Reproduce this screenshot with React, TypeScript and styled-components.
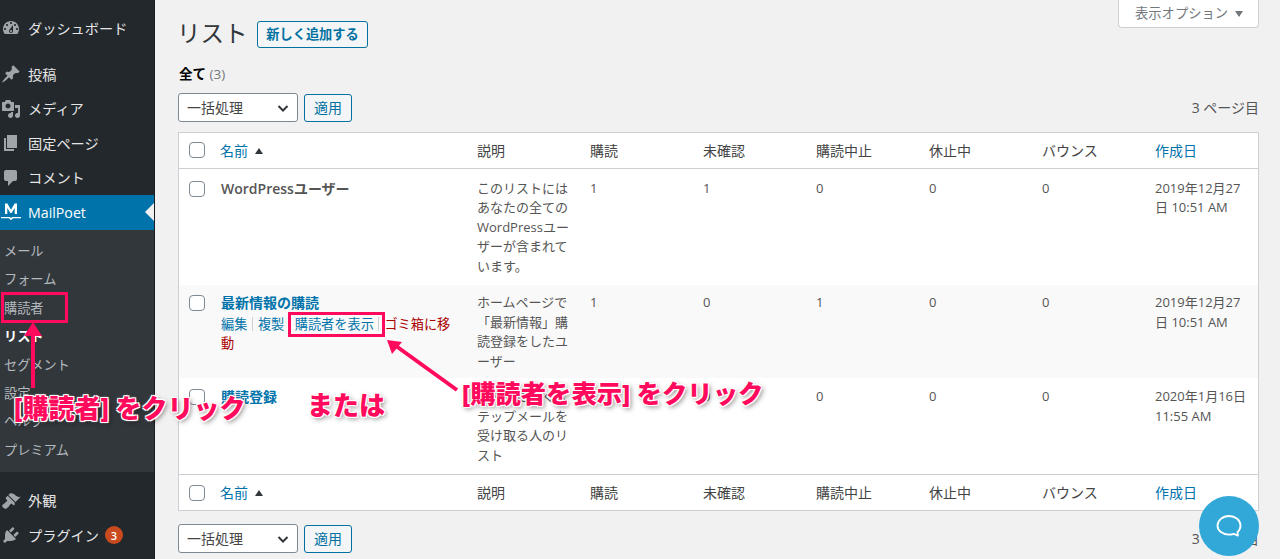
import React from "react"
import styled, { createGlobalStyle } from "styled-components"

const GlobalStyle = createGlobalStyle`
  html, body {
    margin: 0;
    padding: 0;
    background: #f1f1f1;
  }
  body {
    font-family: "Open Sans", "Noto Sans CJK JP", sans-serif;
    font-size: 13px;
    line-height: 19.5px;
    color: #555;
  }
`

const Page = styled.div`
  position: relative;
  display: flex;
  width: 1280px;
  height: 559px;
  overflow: hidden;
`

const Sidebar = styled.nav`
  flex: 0 0 155px;
  box-sizing: border-box;
  padding-top: 11px;
  background: #23282d;
  border-right: 1px solid #1b1f23;
`

const MenuItem = styled.div<{ $current?: boolean; $gap?: boolean }>`
  position: relative;
  display: flex;
  align-items: center;
  height: 34.5px;
  margin-top: ${(p) => (p.$gap ? "11.5px" : "0")};
  font-size: 14.2px;
  color: ${(p) => (p.$current ? "#fff" : "#e6e6e6")};
  background: ${(p) => (p.$current ? "#0073aa" : "transparent")};
  ${(p) =>
    p.$current
      ? `
    &::after {
      content: "";
      position: absolute;
      right: 0;
      top: 8px;
      border: 9px solid transparent;
      border-left: 0;
      border-right-color: #f1f1f1;
    }
  `
      : ""}
`

const MenuIcon = styled.svg<{ $current?: boolean }>`
  flex: 0 0 20px;
  width: 20px;
  height: 20px;
  margin: 0 7px 0 1px;
  fill: ${(p) => (p.$current ? "#fff" : "#a0a5aa")};
`

const Badge = styled.span`
  display: flex;
  align-items: center;
  justify-content: center;
  width: 18px;
  height: 18px;
  margin-left: 6px;
  border-radius: 50%;
  background: #ca4a1f;
  color: #fff;
  font-size: 11px;
  font-weight: 600;
`

const SubMenu = styled.div`
  padding: 8px 0 7.5px;
  background: #32373c;
`

const SubItem = styled.div<{ $current?: boolean }>`
  display: flex;
  align-items: center;
  height: 28.4px;
  padding-left: 4px;
  font-size: 13.2px;
  font-weight: ${(p) => (p.$current ? 700 : 400)};
  color: ${(p) => (p.$current ? "#fff" : "#b4b9be")};
`

const Main = styled.main`
  flex: 1;
  min-width: 0;
  padding: 0 21px 0 23px;
`

const Header = styled.header`
  display: flex;
  align-items: flex-start;
  height: 65px;
`

const Title = styled.h1`
  margin: 19px 9.5px 0 -1px;
  font-size: 23.5px;
  line-height: 29px;
  font-weight: 400;
  color: #32373c;
`

const AddButton = styled.div`
  box-sizing: border-box;
  margin-top: 21px;
  width: 111px;
  height: 27px;
  display: flex;
  align-items: center;
  justify-content: center;
  border: 1.5px solid #0071a1;
  border-radius: 3px;
  background: #f3f5f6;
  color: #0071a1;
  font-size: 13.2px;
  font-weight: 600;
`

const OptionsTab = styled.div`
  box-sizing: border-box;
  display: flex;
  align-items: center;
  margin-left: auto;
  width: 141px;
  height: 28px;
  padding-left: 16px;
  background: #fff;
  border: 1px solid #ccd0d4;
  border-top: 0;
  border-radius: 0 0 4px 4px;
  color: #72777c;
  font-size: 13.3px;
`

const TabCaret = styled.span`
  margin-left: 7px;
  border: 4px solid transparent;
  border-top: 6px solid #72777c;
  border-bottom: 0;
`

const Filter = styled.div`
  height: 19px;
  margin-bottom: 9px;
  margin-left: 1px;
  font-size: 13.5px;
  color: #72777c;
  strong {
    color: #000;
    font-weight: 700;
  }
`

const Toolbar = styled.div`
  display: flex;
  align-items: center;
  gap: 6px;
  height: 29px;
`

const BulkSelect = styled.div`
  box-sizing: border-box;
  display: flex;
  align-items: center;
  justify-content: space-between;
  width: 120px;
  height: 29px;
  padding: 0 8px;
  border: 1px solid #7e8993;
  border-radius: 3px;
  background: #fff;
  color: #444;
  font-size: 14px;
`

const Chevron = styled.svg`
  width: 12px;
  height: 12px;
  fill: none;
  stroke: #32373c;
  stroke-width: 2;
`

const ApplyButton = styled.div`
  box-sizing: border-box;
  display: flex;
  align-items: center;
  justify-content: center;
  width: 48px;
  height: 28px;
  border: 1px solid #0071a1;
  border-radius: 3px;
  background: #f3f5f6;
  color: #0071a1;
  font-size: 14px;
`

const PageCount = styled.div`
  margin-left: auto;
  font-size: 14px;
  color: #555;
`

const ListTable = styled.table`
  box-sizing: border-box;
  width: 100%;
  margin: 10px 0 13px;
  table-layout: fixed;
  border-collapse: separate;
  border-spacing: 0;
  background: #fff;
  border: 1px solid #ccd0d4;
`

const HeadCell = styled.th<{ $foot?: boolean }>`
  height: ${(p) => (p.$foot ? "36px" : "35.5px")};
  box-sizing: border-box;
  padding: 0 10px;
  text-align: left;
  font-size: 14px;
  font-weight: 400;
  color: #444;
  border-bottom: ${(p) => (p.$foot ? "0" : "1px solid #ccd0d4")};
  border-top: ${(p) => (p.$foot ? "1px solid #ccd0d4" : "0")};
`

const SortLink = styled.span`
  color: #0073aa;
`

const SortCaret = styled.span`
  display: inline-block;
  margin-left: 7px;
  vertical-align: 2px;
  border: 4.5px solid transparent;
  border-bottom: 6px solid #32373c;
  border-top: 0;
`

const Row = styled.tr<{ $alt?: boolean; $height: number; $top: number }>`
  --top: ${(p) => p.$top}px;
  height: ${(p) => p.$height}px;
  background: ${(p) => (p.$alt ? "#f9f9f9" : "#fff")};
`

const Cell = styled.td`
  padding: var(--top) 10px 5px;
  vertical-align: top;
  font-size: 13px;
  line-height: 19.5px;
  color: #555;
  overflow-wrap: anywhere;
`

const CheckCell = styled(Cell)`
  padding: calc(var(--top) + 2px) 0 0 10px;
`

const Check = styled.input.attrs({ type: "checkbox" })`
  appearance: none;
  display: block;
  box-sizing: border-box;
  width: 16px;
  height: 16px;
  margin: 0;
  background: #fff;
  border: 1px solid #7e8993;
  border-radius: 4px;
`

const RowName = styled.div<{ $plain?: boolean }>`
  font-size: 14px;
  font-weight: 600;
  padding-left: 1px;
  color: ${(p) => (p.$plain ? "#555" : "#0073aa")};
`

const RowActions = styled.div`
  margin-top: 2px;
  padding-left: 1px;
  font-size: 13.2px;
`

const ActionLink = styled.span<{ $danger?: boolean }>`
  color: ${(p) => (p.$danger ? "#a00" : "#0073aa")};
`

const ActionSep = styled.span`
  display: inline-block;
  width: 1px;
  height: 14px;
  margin: 0 5px 0 4.5px;
  vertical-align: -2px;
  background: #ccd0d4;
`

const Mark = styled.div`
  position: absolute;
  box-sizing: border-box;
  border: 3px solid #ff0a5c;
`

const SideMark = styled(Mark)`
  left: 1px;
  top: 292px;
  width: 67px;
  height: 31px;
`

const RowMark = styled(Mark)`
  left: 288px;
  top: 312px;
  width: 97px;
  height: 25px;
`

const Arrows = styled.svg`
  position: absolute;
  left: 0;
  top: 0;
  width: 1280px;
  height: 559px;
  fill: #ff0a5c;
  stroke: #ff0a5c;
  pointer-events: none;
`

const Callout = styled.div<{ $size?: number }>`
  position: absolute;
  font-size: ${(p) => p.$size ?? 26}px;
  line-height: 32px;
  font-weight: 900;
  white-space: nowrap;
  color: #ff0a5c;
  text-shadow: -1px -1px 0 #fff, 1px -1px 0 #fff, -1px 1px 0 #fff, 1px 1px 0 #fff,
    0 0 3px #fff, 2px 2px 5px rgba(0, 0, 0, 0.5);
`

const SideCallout = styled(Callout)`
  left: 14px;
  top: 392px;
`

const OrCallout = styled(Callout)`
  left: 307px;
  top: 389px;
`

const RowCallout = styled(Callout)`
  left: 462px;
  top: 377px;
`

const ChatBubble = styled.div`
  position: absolute;
  left: 1199px;
  top: 496px;
  width: 60px;
  height: 60px;
  display: flex;
  align-items: center;
  justify-content: center;
  border-radius: 50%;
  background: #31a8d8;
`

const ChatIcon = styled.svg`
  width: 28px;
  height: 28px;
  fill: none;
  stroke: #fff;
  stroke-width: 1.8;
  stroke-linejoin: round;
`

const icons = {
  dashboard:
    "M3.76 16h12.48c1.1-1.37 1.76-3.11 1.76-5 0-4.42-3.58-8-8-8s-8 3.58-8 8c0 1.89.66 3.63 1.76 5zM10 4c.55 0 1 .45 1 1s-.45 1-1 1-1-.45-1-1 .45-1 1-1zM6 6c.55 0 1 .45 1 1s-.45 1-1 1-1-.45-1-1 .45-1 1-1zm8 0c.55 0 1 .45 1 1s-.45 1-1 1-1-.45-1-1 .45-1 1-1zm-5.37 5.55L12 7v6c0 1.1-.9 2-2 2s-2-.9-2-2c0-.57.24-1.08.63-1.45zM4 10c.55 0 1 .45 1 1s-.45 1-1 1-1-.45-1-1 .45-1 1-1zm12 0c.55 0 1 .45 1 1s-.45 1-1 1-1-.45-1-1 .45-1 1-1zm-5 3c0-.55-.45-1-1-1s-1 .45-1 1 .45 1 1 1 1-.45 1-1z",
  post: "M10.44 3.02l1.82-1.82 6.36 6.35-1.83 1.82c-1.05-.68-2.48-.57-3.41.36l-.75.75c-.92.93-1.04 2.35-.35 3.41l-1.83 1.82-2.41-2.41-2.8 2.79c-.42.42-3.38 2.71-3.8 2.29s1.86-3.39 2.28-3.81l2.79-2.79L4.1 9.36l1.83-1.82c1.05.69 2.48.57 3.4-.36l.75-.75c.93-.92 1.05-2.35.36-3.41z",
  media:
    "M13 11V4c0-.55-.45-1-1-1h-1.67L9 1H5L3.67 3H2c-.55 0-1 .45-1 1v7c0 .55.45 1 1 1h10c.55 0 1-.45 1-1zM7 4.5c1.38 0 2.5 1.12 2.5 2.5S8.38 9.5 7 9.5 4.5 8.38 4.5 7 5.62 4.5 7 4.5zM14 6h5v10.5c0 1.38-1.12 2.5-2.5 2.5S14 17.88 14 16.5s1.12-2.5 2.5-2.5c.17 0 .34.02.5.05V9h-3V6zm-4 8.05V13h2v3.5c0 1.38-1.12 2.5-2.5 2.5S7 17.88 7 16.5 8.12 14 9.5 14c.17 0 .34.02.5.05z",
  page: "M6 15V2h10v13H6zm-1 1h8v2H3V5h2v11z",
  comment:
    "M5 2h9c1.1 0 2 .9 2 2v7c0 1.1-.9 2-2 2h-2l-5 5v-5H5c-1.1 0-2-.9-2-2V4c0-1.1.9-2 2-2z",
  appearance:
    "M14.48 11.06L7.41 3.99l1.5-1.5c.5-.56 2.3-.47 3.51.32 1.21.8 1.43 1.28 2.91 2.1 1.18.64 2.45 1.26 4.45.85zm-.71.71L6.7 4.7 4.93 6.47c-.39.39-.39 1.02 0 1.41l1.06 1.06c.39.39.39 1.03 0 1.42-.6.6-1.43 1.11-2.21 1.69-.35.26-.7.53-1.01.84C1.43 13.23.4 14.8 2.3 16.7s3.47.87 4.81-.47c.31-.31.58-.66.84-1.01.58-.78 1.09-1.61 1.69-2.21.39-.39 1.03-.39 1.42 0l1.06 1.06c.39.39 1.02.39 1.41 0z",
  plugin:
    "M13.11 4.36L9.87 7.6 8 5.73l3.24-3.24c.35-.34 1.05-.2 1.56.32.52.51.66 1.21.31 1.55zm-8 1.77l.91-1.12 9.01 9.01-1.19.84c-.71.71-2.63 1.16-3.82 1.16H6.14L4.9 17.26c-.59.59-1.54.59-2.12 0-.59-.58-.59-1.53 0-2.12l1.24-1.24v-3.88c0-1.13.4-3.19 1.09-3.89zm7.26 3.97l3.24-3.24c.34-.35 1.04-.21 1.55.31.52.51.66 1.21.31 1.55l-3.24 3.25z",
  mailpoet:
    "M4 1.5h2.4L10 7.7l3.6-6.2H16v10.5h-2.3V5.9l-3.1 5.2H9.4L6.3 5.9V12H4zM0 15h8.2c.9 0 1.3.5 1.8 1.3.5-.8.9-1.3 1.8-1.3H20v1.3h-7.6c-.8 0-1.2.7-2.4 2-1.2-1.3-1.6-2-2.4-2H0z",
}

function Icon({ d, current }: { d: string; current?: boolean }) {
  return (
    <MenuIcon viewBox="0 0 20 20" $current={current}>
      <path d={d} />
    </MenuIcon>
  )
}

const subItems = ["メール", "フォーム", "購読者", "リスト", "セグメント", "設定", "ヘルプ", "プレミアム"]

const columns = ["説明", "購読", "未確認", "購読中止", "休止中", "バウンス"]

const rows = [
  {
    name: "WordPressユーザー",
    plain: true,
    height: 116,
    top: 10,
    desc: "このリストにはあなたの全てのWordPressユーザーが含まれています。",
    counts: [1, 1, 0, 0, 0],
    date: "2019年12月27日 10:51 AM",
  },
  {
    name: "最新情報の購読",
    actions: true,
    alt: true,
    height: 93.5,
    top: 8.5,
    desc: "ホームページで「最新情報」購読登録をしたユーザー",
    counts: [1, 0, 1, 0, 0],
    date: "2019年12月27日 10:51 AM",
  },
  {
    name: "購読登録",
    height: 96,
    top: 9,
    desc: "購読後に届くステップメールを受け取る人のリスト",
    counts: [1, 0, 0, 0, 0],
    date: "2020年1月16日 11:55 AM",
  },
]

function HeadRow({ foot }: { foot?: boolean }) {
  return (
    <tr>
      <HeadCell $foot={foot}>
        <Check />
      </HeadCell>
      <HeadCell $foot={foot}>
        <SortLink>名前</SortLink>
        <SortCaret />
      </HeadCell>
      {columns.map((c) => (
        <HeadCell key={c} $foot={foot}>
          {c}
        </HeadCell>
      ))}
      <HeadCell $foot={foot}>
        <SortLink>作成日</SortLink>
      </HeadCell>
    </tr>
  )
}

function BulkActions() {
  return (
    <>
      <BulkSelect>
        一括処理
        <Chevron viewBox="0 0 12 12">
          <path d="M1.5 4l4.5 4.5L10.5 4" />
        </Chevron>
      </BulkSelect>
      <ApplyButton>適用</ApplyButton>
      <PageCount>3 ページ目</PageCount>
    </>
  )
}

export default function App() {
  return (
    <Page>
      <GlobalStyle />
      <Sidebar>
        <MenuItem>
          <Icon d={icons.dashboard} />
          ダッシュボード
        </MenuItem>
        <MenuItem $gap>
          <Icon d={icons.post} />
          投稿
        </MenuItem>
        <MenuItem>
          <Icon d={icons.media} />
          メディア
        </MenuItem>
        <MenuItem>
          <Icon d={icons.page} />
          固定ページ
        </MenuItem>
        <MenuItem>
          <Icon d={icons.comment} />
          コメント
        </MenuItem>
        <MenuItem $current>
          <Icon d={icons.mailpoet} current />
          MailPoet
        </MenuItem>
        <SubMenu>
          {subItems.map((s) => (
            <SubItem key={s} $current={s === "リスト"}>
              {s}
            </SubItem>
          ))}
        </SubMenu>
        <MenuItem $gap>
          <Icon d={icons.appearance} />
          外観
        </MenuItem>
        <MenuItem>
          <Icon d={icons.plugin} />
          プラグイン
          <Badge>3</Badge>
        </MenuItem>
      </Sidebar>

      <Main>
        <Header>
          <Title>リスト</Title>
          <AddButton>新しく追加する</AddButton>
          <OptionsTab>
            表示オプション
            <TabCaret />
          </OptionsTab>
        </Header>
        <Filter>
          <strong>全て</strong> (3)
        </Filter>
        <Toolbar>
          <BulkActions />
        </Toolbar>
        <ListTable>
          <colgroup>
            <col width={31} />
            <col width={257} />
            <col width={113} />
            <col width={113} />
            <col width={113} />
            <col width={113} />
            <col width={113} />
            <col width={113} />
            <col />
          </colgroup>
          <thead>
            <HeadRow />
          </thead>
          <tbody>
            {rows.map((r) => (
              <Row key={r.name} $alt={r.alt} $height={r.height} $top={r.top}>
                <CheckCell>
                  <Check />
                </CheckCell>
                <Cell>
                  <RowName $plain={r.plain}>{r.name}</RowName>
                  {r.actions && (
                    <RowActions>
                      <ActionLink>編集</ActionLink>
                      <ActionSep />
                      <ActionLink>複製</ActionLink>
                      <ActionSep />
                      <ActionLink>購読者を表示</ActionLink>
                      <ActionSep />
                      <ActionLink $danger>ゴミ箱に移動</ActionLink>
                    </RowActions>
                  )}
                </Cell>
                <Cell>{r.desc}</Cell>
                {r.counts.map((n, i) => (
                  <Cell key={i}>{n}</Cell>
                ))}
                <Cell>{r.date}</Cell>
              </Row>
            ))}
          </tbody>
          <tfoot>
            <HeadRow foot />
          </tfoot>
        </ListTable>
        <Toolbar>
          <BulkActions />
        </Toolbar>
      </Main>

      <SideMark />
      <RowMark />
      <Arrows viewBox="0 0 1280 559">
        <line x1="33" y1="388" x2="33" y2="330" strokeWidth="4" />
        <polygon points="33,322 24,336 42,336" stroke="none" />
        <line x1="457" y1="390" x2="396" y2="346" strokeWidth="4" />
        <polygon points="387,340 402,342 392,354" stroke="none" />
      </Arrows>
      <SideCallout>[購読者] をクリック</SideCallout>
      <OrCallout>または</OrCallout>
      <RowCallout $size={25.3}>[購読者を表示] をクリック</RowCallout>

      <ChatBubble>
        <ChatIcon viewBox="0 0 28 28">
          <path d="M14 4c6.4 0 11.5 4.1 11.5 9.6 0 2.6-1.1 4.9-3 6.6l.4 3.5-4-1.8c-1.5.5-3.1.8-4.9.8-6.4 0-11.5-4-11.5-9.1S7.6 4 14 4z" />
        </ChatIcon>
      </ChatBubble>
    </Page>
  )
}
